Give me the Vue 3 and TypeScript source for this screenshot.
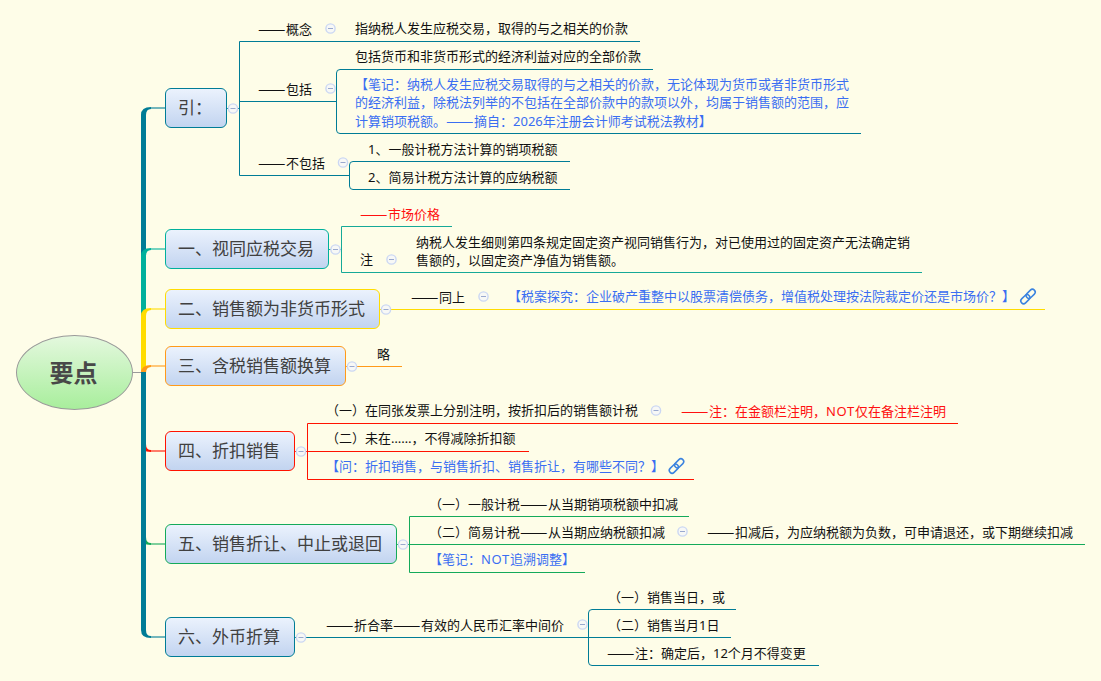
<template>
  <div class="map">
    <svg class="wires" width="1101" height="681" viewBox="0 0 1101 681">
      <path d="M132 372.5H141" stroke="#9a9a9a" fill="none" />
      <g v-for="b in branches" :key="b.y">
        <path :d="branchPath(b.y)" :fill="b.color" />
        <path :d="`M151 ${b.y}H165`" :stroke="b.color" stroke-width="2" opacity="0.55" fill="none" />
      </g>
      <path v-for="w in wires" :key="w.d" :d="w.d" :stroke="w.color" fill="none" />
      <g v-for="t in toggles" :key="`${t[0]}-${t[1]}`" :transform="`translate(${t[0]} ${t[1]})`">
        <circle r="4.6" fill="#f7f8f6" stroke="#cbd7f3" stroke-width="1.4" />
        <path d="M-2.5 0H2.5" stroke="#9aa9cf" />
      </g>
      <g v-for="l in links" :key="l[0]" :transform="`translate(${l[0]} ${l[1]}) rotate(-45)`" fill="none" stroke="#3b83df" stroke-width="1.5">
        <rect x="-9" y="-2.8" width="10.5" height="5.6" rx="2.8" />
        <rect x="-1.5" y="-2.8" width="10.5" height="5.6" rx="2.8" />
      </g>
    </svg>

    <div class="root">要点</div>

    <div
      v-for="n in topics"
      :key="n.text"
      class="topic"
      :style="{ left: '165px', top: n.top + 'px', width: n.width + 'px', borderColor: n.color }"
    >
      {{ n.text }}
    </div>

    <div
      v-for="t in labels"
      :key="t.text"
      class="label"
      :class="t.tone"
      :style="{ left: t.x + 'px', top: t.y - 10 + 'px' }"
    ><span v-for="(p, i) in splitText(t.text)" :key="i" :class="p.kind">{{ p.text }}</span></div>
  </div>
</template>

<script setup lang="ts">
const TEAL = '#007c96';
const AQUA = '#16a998';
const YELLOW = '#ffdc00';
const ORANGE = '#ff9a1a';
const RED = '#ff1200';
const GREEN = '#14aa5a';

// lower branches first, the teal one has to sit over them on the trunk
const branches = [
  { y: 451, color: RED },
  { y: 544, color: GREEN },
  { y: 637, color: TEAL },
  { y: 108, color: TEAL },
  { y: 249, color: '#00b09c' },
  { y: 309, color: YELLOW },
  { y: 366, color: ORANGE },
];

const branchPath = (y: number) => {
  if (y < 372) {
    return `M141 372V${y + 7}Q141 ${y - 1} 151 ${y - 1}V${y + 1}Q146 ${y + 1} 146 ${y + 7}V372Z`;
  }
  return `M141 372V${y - 7}Q141 ${y + 1} 151 ${y + 1}V${y - 1}Q146 ${y - 1} 146 ${y - 7}V372Z`;
};

// dashes and capitals run a little wider than the body font gives them
const splitText = (text: string) =>
  text
    .split(/(——|[A-Z]+)/)
    .filter(Boolean)
    .map((part) => ({
      text: part,
      kind: part === '——' ? 'dash' : /^[A-Z]+$/.test(part) ? 'caps' : '',
    }));

const topics = [
  { text: '引：', top: 88, width: 62, color: TEAL },
  { text: '一、视同应税交易', top: 229, width: 164, color: '#00b09c' },
  { text: '二、销售额为非货币形式', top: 289, width: 215, color: YELLOW },
  { text: '三、含税销售额换算', top: 346, width: 181, color: ORANGE },
  { text: '四、折扣销售', top: 431, width: 130, color: RED },
  { text: '五、销售折让、中止或退回', top: 524, width: 232, color: GREEN },
  { text: '六、外币折算', top: 617, width: 130, color: TEAL },
];

const wires = [
  // 引
  { color: TEAL, d: 'M227 108.5H239.5M640 41.5H239.5V175.5H350M239.5 101.5H337' },
  { color: TEAL, d: 'M653 69.5H340Q336.5 69.5 336.5 73V130Q336.5 133.5 340 133.5H861' },
  { color: TEAL, d: 'M570 161.5H353Q349.5 161.5 349.5 165V186Q349.5 189.5 353 189.5H570' },
  // 一
  { color: AQUA, d: 'M329 249.5H341.5M452 226.5H341.5V272.5H922' },
  // 二、三
  { color: YELLOW, d: 'M380 309.5H1045' },
  { color: ORANGE, d: 'M346 366.5H402' },
  // 四
  { color: RED, d: 'M295 451.5H529M958 423.5H307.5V479.5H694' },
  // 五
  { color: GREEN, d: 'M397 544.5H1085M689 516.5H409.5V572.5H585' },
  // 六
  { color: TEAL, d: 'M295 637.5H731' },
  { color: TEAL, d: 'M736 609.5H592Q588.5 609.5 588.5 613V662Q588.5 665.5 592 665.5H819' },
];

const toggles = [
  [233, 108.5], [330.5, 28.5], [330.5, 88.5], [343, 162.5],
  [335.5, 249.5], [391.5, 259.5],
  [386, 309.5], [483.5, 296.5],
  [352, 366.5],
  [301, 451.5], [656, 410.5],
  [403, 544.5], [682.5, 531.5],
  [301, 637.5], [582.5, 624.5],
];

const links = [
  [1028, 296.5],
  [676.5, 466],
];

const labels = [
  { x: 258, y: 29, text: '——概念' },
  { x: 355, y: 29, text: '指纳税人发生应税交易，取得的与之相关的价款' },
  { x: 355, y: 57, text: '包括货币和非货币形式的经济利益对应的全部价款' },
  { x: 258, y: 89, text: '——包括' },
  { x: 355, y: 85, tone: 'note', text: '【笔记：纳税人发生应税交易取得的与之相关的价款，无论体现为货币或者非货币形式' },
  { x: 355, y: 103, tone: 'note', text: '的经济利益，除税法列举的不包括在全部价款中的款项以外，均属于销售额的范围，应' },
  { x: 355, y: 121, tone: 'note', text: '计算销项税额。——摘自：2026年注册会计师考试税法教材】' },
  { x: 258, y: 163, text: '——不包括' },
  { x: 368, y: 150, text: '1、一般计税方法计算的销项税额' },
  { x: 368, y: 178, text: '2、简易计税方法计算的应纳税额' },
  { x: 360, y: 214, tone: 'warn', text: '——市场价格' },
  { x: 360, y: 260, text: '注' },
  { x: 416, y: 243, text: '纳税人发生细则第四条规定固定资产视同销售行为，对已使用过的固定资产无法确定销' },
  { x: 416, y: 261, text: '售额的，以固定资产净值为销售额。' },
  { x: 411, y: 297, text: '——同上' },
  { x: 508, y: 297, tone: 'note', text: '【税案探究：企业破产重整中以股票清偿债务，增值税处理按法院裁定价还是市场价？】' },
  { x: 377, y: 355, text: '略' },
  { x: 326, y: 411, text: '（一）在同张发票上分别注明，按折扣后的销售额计税' },
  { x: 681, y: 411, tone: 'warn', text: '——注：在金额栏注明，NOT仅在备注栏注明' },
  { x: 326, y: 439, text: '（二）未在……，不得减除折扣额' },
  { x: 326, y: 467, tone: 'note', text: '【问：折扣销售，与销售折扣、销售折让，有哪些不同？】' },
  { x: 429, y: 504, text: '（一）一般计税——从当期销项税额中扣减' },
  { x: 429, y: 532, text: '（二）简易计税——从当期应纳税额扣减' },
  { x: 707, y: 532, text: '——扣减后，为应纳税额为负数，可申请退还，或下期继续扣减' },
  { x: 429, y: 560, tone: 'note', text: '【笔记：NOT追溯调整】' },
  { x: 326, y: 625, text: '——折合率——有效的人民币汇率中间价' },
  { x: 608, y: 598, text: '（一）销售当日，或' },
  { x: 608, y: 626, text: '（二）销售当月1日' },
  { x: 607, y: 653, text: '——注：确定后，12个月不得变更' },
];
</script>

<style scoped>
.map {
  position: relative;
  width: 1101px;
  height: 681px;
  overflow: hidden;
  background: #fefde8;
  font-family: "Noto Sans", "Noto Sans CJK SC", sans-serif;
}

.wires {
  position: absolute;
  left: 0;
  top: 0;
}

.root {
  position: absolute;
  left: 16px;
  top: 335px;
  width: 117px;
  height: 75px;
  box-sizing: border-box;
  display: flex;
  align-items: center;
  justify-content: center;
  padding: 0 2px 2px 0;
  border: 1px solid #9a9a9a;
  border-radius: 50%;
  background: linear-gradient(#e4f8de, #a8ee9c);
  color: #484848;
  font-size: 24px;
  font-weight: 700;
}

.topic {
  position: absolute;
  height: 40px;
  box-sizing: border-box;
  display: flex;
  align-items: center;
  padding: 0 0 3px 12px;
  border: 1px solid;
  border-radius: 6px;
  background: linear-gradient(#ebf2fd, #c2d4f0);
  color: #404040;
  font-size: 17px;
  white-space: nowrap;
}

.label {
  position: absolute;
  height: 18px;
  line-height: 18px;
  font-size: 13px;
  color: #111;
  white-space: pre;
}

/* the CJK dash is short here, stretch the pair to the 28px of the reference */
.dash {
  display: inline-block;
  width: 28px;
  font-family: "Noto Sans CJK SC", sans-serif;
  font-size: 14px;
  transform: scaleX(1.17);
  transform-origin: left center;
}

.caps {
  letter-spacing: 0.7px;
}

.note {
  color: #3a6ef2;
}

.warn {
  color: #ff1010;
}
</style>

<style>
html,
body {
  background: #fefde8;
}
</style>
